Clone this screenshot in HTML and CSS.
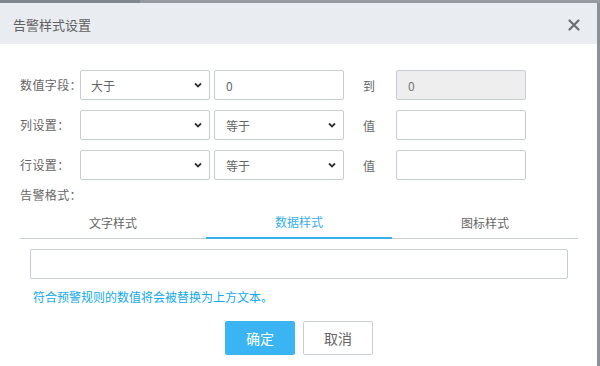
FILE: index.html
```html
<!DOCTYPE html>
<html lang="zh">
<head>
<meta charset="utf-8">
<title>告警样式设置</title>
<link rel="stylesheet" href="styles.css">
</head>
<body>
<div class="topstrip"></div>
<div class="dialog">
  <div class="header">
    <span class="title">告警样式设置</span>
    <svg class="close" width="12" height="12" viewBox="0 0 12 12"><path d="M1.5 1.5 L10.5 10.5 M10.5 1.5 L1.5 10.5" stroke="#6b6f74" stroke-width="2.2" stroke-linecap="round"/></svg>
  </div>
  <div class="body">
    <div class="form">
      <div class="row">
        <span class="label">数值字段：</span>
        <div class="select"><span>大于</span><svg class="chev" width="8" height="6" viewBox="0 0 8 6"><path d="M1 1.5 L4 4.5 L7 1.5" fill="none" stroke="#333" stroke-width="1.8"/></svg></div>
        <div class="select"><span>0</span></div>
        <span class="mid">到</span>
        <div class="input disabled"><span>0</span></div>
      </div>
      <div class="row">
        <span class="label">列设置：</span>
        <div class="select"><span></span><svg class="chev" width="8" height="6" viewBox="0 0 8 6"><path d="M1 1.5 L4 4.5 L7 1.5" fill="none" stroke="#333" stroke-width="1.8"/></svg></div>
        <div class="select"><span>等于</span><svg class="chev" width="8" height="6" viewBox="0 0 8 6"><path d="M1 1.5 L4 4.5 L7 1.5" fill="none" stroke="#333" stroke-width="1.8"/></svg></div>
        <span class="mid">值</span>
        <div class="input"><span></span></div>
      </div>
      <div class="row">
        <span class="label">行设置：</span>
        <div class="select"><span></span><svg class="chev" width="8" height="6" viewBox="0 0 8 6"><path d="M1 1.5 L4 4.5 L7 1.5" fill="none" stroke="#333" stroke-width="1.8"/></svg></div>
        <div class="select"><span>等于</span><svg class="chev" width="8" height="6" viewBox="0 0 8 6"><path d="M1 1.5 L4 4.5 L7 1.5" fill="none" stroke="#333" stroke-width="1.8"/></svg></div>
        <span class="mid">值</span>
        <div class="input"><span></span></div>
      </div>
    </div>
    <div class="section-label">告警格式：</div>
    <div class="tabs">
      <div class="tab">文字样式</div>
      <div class="tab active">数据样式</div>
      <div class="tab">图标样式</div>
    </div>
    <div class="tabpane">
      <div class="textbox"></div>
      <div class="hint">符合预警规则的数值将会被替换为上方文本。</div>
    </div>
    <div class="buttons">
      <div class="btn primary">确定</div>
      <div class="btn">取消</div>
    </div>
  </div>
</div>
</body>
</html>
```

FILE: styles.css
```css
html, body {
  margin: 0;
  padding: 0;
}
body {
  width: 600px;
  height: 366px;
  overflow: hidden;
  background: #8b9197;
  font-family: "Noto Sans CJK SC", "Noto Sans", sans-serif;
  color: #666;
  font-size: 12px;
}
.topstrip {
  height: 3px;
  background: linear-gradient(to right, #80878e 0, #80878e 140px, #959ba1 140px);
}
.dialog {
  width: 597px;
  height: 363px;
  background: #fff;
}
.header {
  height: 41px;
  background: #e9ecf0;
  display: flex;
  align-items: center;
  justify-content: space-between;
  padding: 0 17px 0 13px;
}
.title {
  font-size: 13px;
  color: #606060;
  line-height: 16px;
  margin-top: 2px;
}
.close {
  display: block;
  margin-top: 3px;
}
.body {
  padding: 26px 19px 0 20px;
}
.form {
  display: flex;
  flex-direction: column;
  gap: 10px;
}
.row {
  display: flex;
  align-items: center;
  height: 30px;
}
.label {
  width: 60px;
  flex-shrink: 0;
  white-space: nowrap;
  line-height: 16px;
  letter-spacing: 0.4px;
}
.select, .input {
  box-sizing: border-box;
  flex-shrink: 0;
  width: 130px;
  height: 30px;
  border: 1px solid #c6cdd6;
  border-radius: 2px;
  display: flex;
  align-items: center;
  justify-content: space-between;
  padding: 0 7px 0 10px;
  color: #666;
}
.select + .select {
  margin-left: 4px;
  padding-left: 11px;
}
.chev {
  display: block;
}
.mid {
  width: 52px;
  flex-shrink: 0;
  padding-left: 19px;
  box-sizing: border-box;
}
.input {
  padding-left: 11px;
}
.input.disabled {
  background: #eeeeee;
  color: #777;
}
.section-label {
  margin-top: 7px;
  line-height: 16px;
  letter-spacing: 0.4px;
}
.tabs {
  display: flex;
  height: 35px;
  border-bottom: 1px solid #c6cdd6;
}
.tab {
  flex: 1;
  display: flex;
  align-items: center;
  justify-content: center;
  padding-top: 3px;
  color: #666;
}
.tab.active {
  color: #38aeea;
  border-bottom: 2px solid #38aeea;
  margin-bottom: -1px;
}
.tabpane {
  padding: 10px 10px 0 10px;
}
.textbox {
  box-sizing: border-box;
  height: 30px;
  border: 1px solid #c6cdd6;
  border-radius: 2px;
}
.hint {
  margin-top: 10px;
  margin-left: 3px;
  line-height: 16px;
  color: #13a9ec;
}
.buttons {
  display: flex;
  justify-content: center;
  gap: 8px;
  margin-top: 16px;
}
.btn {
  box-sizing: border-box;
  width: 70px;
  height: 34px;
  border: 1px solid #c9ced4;
  border-radius: 2px;
  display: flex;
  align-items: center;
  justify-content: center;
  font-size: 14px;
  color: #666;
  background: #fff;
}
.btn.primary {
  background: #3ab4f3;
  border-color: #3ab4f3;
  color: #fff;
}
```
